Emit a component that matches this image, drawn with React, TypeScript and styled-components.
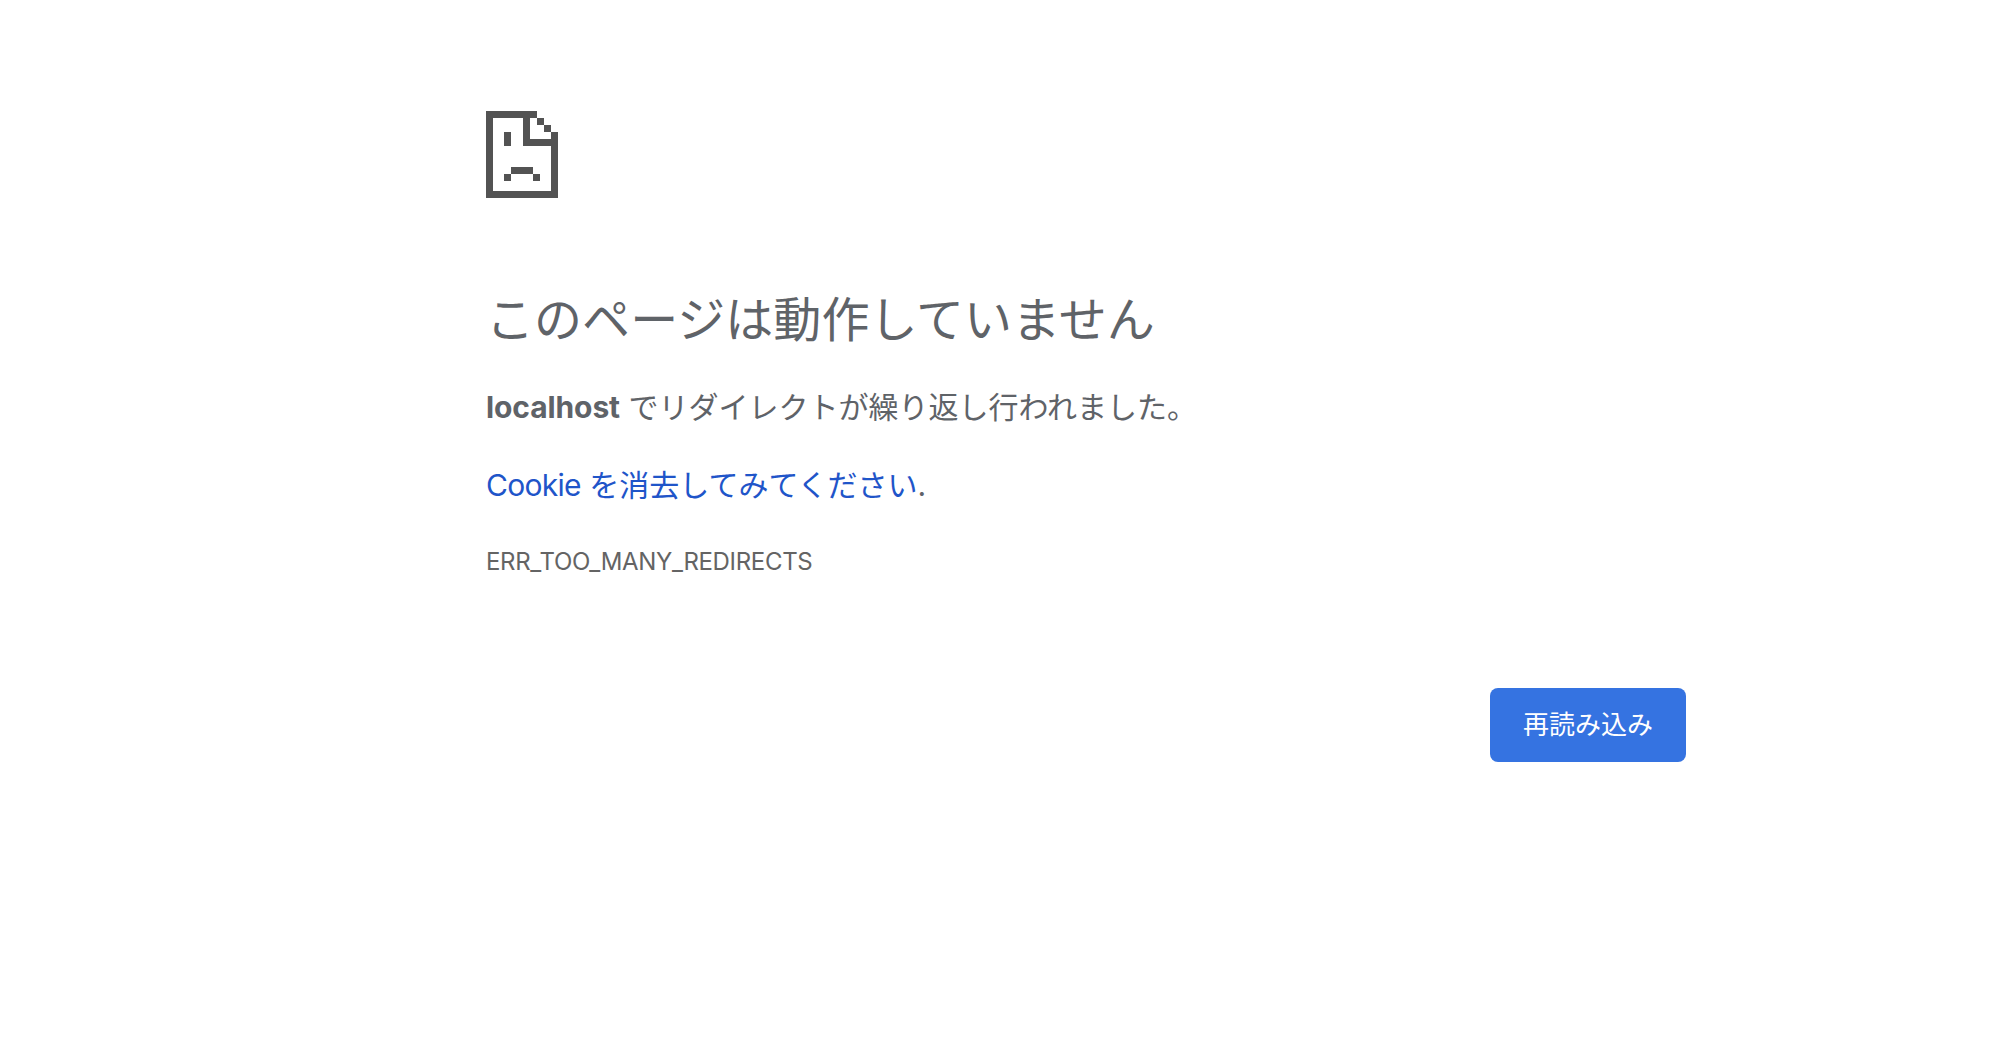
import styled, { createGlobalStyle } from "styled-components";

const GlobalStyle = createGlobalStyle`
  * {
    box-sizing: border-box;
  }
  body {
    margin: 0;
    background-color: #ffffff;
    color: #5f6368;
    font-family: Inter, "Noto Sans CJK JP", sans-serif;
    font-size: 30px;
  }
`

const Container = styled.div`
  width: 1200px;
  margin: 0 auto 0 486px;
  padding-top: 111px;
`

const Icon = styled.svg`
  display: block;
  width: 72px;
  height: 87px;
  fill: #535353;
`

const Title = styled.h1`
  margin: 92px 0 0;
  font-size: 48px;
  font-weight: 400;
  line-height: 60px;
  letter-spacing: 0.05px;
  white-space: nowrap;
`

const Message = styled.p`
  margin: 35px 0 0;
  line-height: 44px;
  white-space: nowrap;
`

const Host = styled.strong`
  font-weight: 700;
  letter-spacing: -0.1px;
`

const Suggestion = styled(Message)`
  margin-top: 34px;
`

const Link = styled.a`
  color: #1f55c9;
  text-decoration: none;
  cursor: pointer;
`

const Latin = styled.span`
  letter-spacing: -0.7px;
`

const ErrorCode = styled.div`
  margin-top: 40px;
  color: #646464;
  font-size: 24px;
  line-height: 30px;
  letter-spacing: -0.32px;
`

const Buttons = styled.div`
  display: flex;
  justify-content: flex-end;
  margin-top: 111px;
`

const ReloadButton = styled.button`
  width: 196px;
  height: 74px;
  padding: 0;
  border: 0;
  border-radius: 8px;
  background-color: #3573e1;
  color: #ffffff;
  font-family: inherit;
  font-size: 26px;
  line-height: 38px;
  cursor: pointer;
`

function SadPage() {
  return (
    <Icon viewBox="0 0 72 87" shapeRendering="crispEdges" aria-hidden="true">
      <path d="M0 0H51V7H44V28H65V21H72V87H0ZM7 7V80H65V35H37V7Z" fillRule="evenodd" />
      <path d="M51 7h7v7h-7zM58 14h7v7h-7z" />
      <path d="M18 21h7v14h-7z" />
      <path d="M25 56h22v7h-22zM18 63h7v7h-7zM47 63h7v7h-7z" />
    </Icon>
  )
}

function App() {
  return (
    <>
      <GlobalStyle />
      <Container lang="ja">
        <SadPage />
        <Title>このページは動作していません</Title>
        <Message>
          <Host>localhost</Host> でリダイレクトが繰り返し行われました。
        </Message>
        <Suggestion>
          <Link><Latin>Cookie</Latin> を消去してみてください</Link>.
        </Suggestion>
        <ErrorCode>ERR_TOO_MANY_REDIRECTS</ErrorCode>
        <Buttons>
          <ReloadButton type="button">再読み込み</ReloadButton>
        </Buttons>
      </Container>
    </>
  )
}

export default App;
